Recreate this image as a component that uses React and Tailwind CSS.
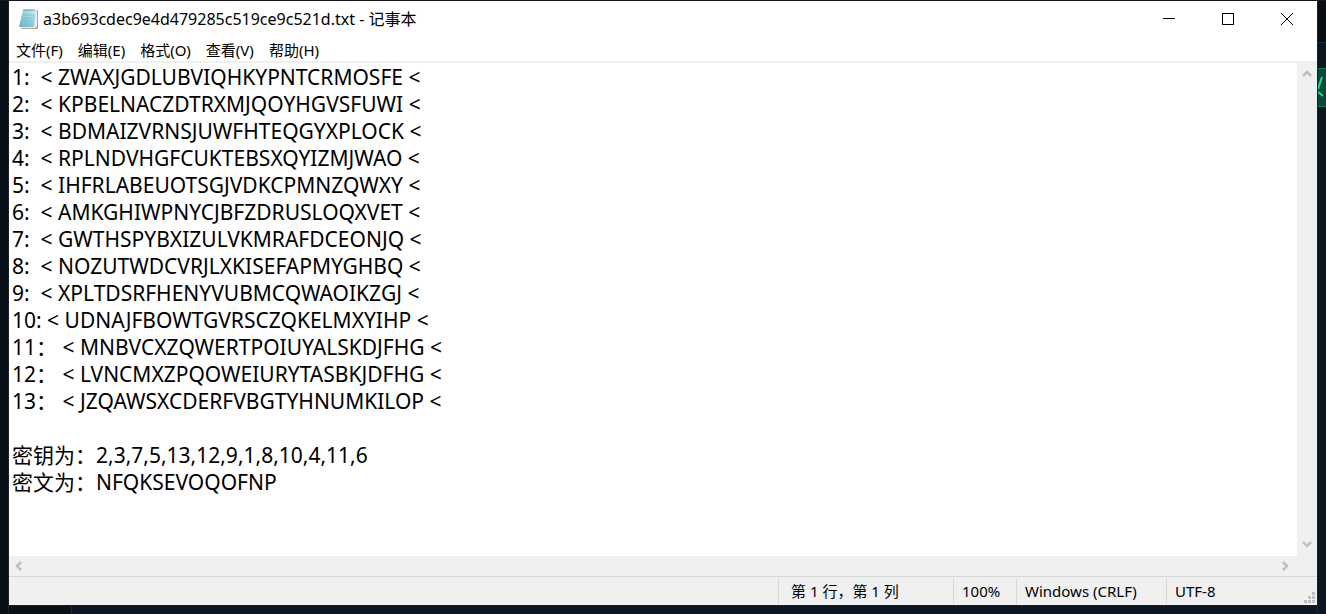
const LINES = [
  "1:  < ZWAXJGDLUBVIQHKYPNTCRMOSFE <",
  "2:  < KPBELNACZDTRXMJQOYHGVSFUWI <",
  "3:  < BDMAIZVRNSJUWFHTEQGYXPLOCK <",
  "4:  < RPLNDVHGFCUKTEBSXQYIZMJWAO <",
  "5:  < IHFRLABEUOTSGJVDKCPMNZQWXY <",
  "6:  < AMKGHIWPNYCJBFZDRUSLOQXVET <",
  "7:  < GWTHSPYBXIZULVKMRAFDCEONJQ <",
  "8:  < NOZUTWDCVRJLXKISEFAPMYGHBQ <",
  "9:  < XPLTDSRFHENYVUBMCQWAOIKZGJ <",
  "10: < UDNAJFBOWTGVRSCZQKELMXYIHP <",
  "11： < MNBVCXZQWERTPOIUYALSKDJFHG <",
  "12： < LVNCMXZPQOWEIURYTASBKJDFHG <",
  "13： < JZQAWSXCDERFVBGTYHNUMKILOP <",
  "",
  "密钥为：2,3,7,5,13,12,9,1,8,10,4,11,6",
  "密文为：NFQKSEVOQOFNP",
];

const MENUS = ["文件(F)", "编辑(E)", "格式(O)", "查看(V)", "帮助(H)"];

function NotepadIcon() {
  return (
    <svg width="20" height="22" viewBox="0 0 20 22" aria-hidden="true">
      <defs>
        <linearGradient id="page" x1="1" y1="0" x2="0" y2="1">
          <stop offset="0" stopColor="#cdeff3" />
          <stop offset="0.5" stopColor="#8fcfdd" />
          <stop offset="1" stopColor="#5fb0c6" />
        </linearGradient>
      </defs>
      <path d="M5 2h14v19H3L1 19z" fill="#b9a582" />
      <path d="M5 2h13v16l-2 2H2z" fill="#e8eeee" />
      <path d="M4 2h13L15 19H0z" fill="url(#page)" />
      <path d="M4 7h11M3 10h12M3 13h11M2 16h12" stroke="#7cc2d2" strokeWidth="1" />
      <path d="M5 1v2M7 1v2M9 1v2M11 1v2M13 1v2M15 1v2" stroke="#7c8588" strokeWidth="1" />
    </svg>
  );
}

function WindowButton({ label, children }) {
  return (
    <button type="button" aria-label={label} className="flex h-9 w-[59px] items-center justify-center">
      <svg width="12" height="12" viewBox="0 0 12 12" fill="none" stroke="#000" shapeRendering="crispEdges">
        {children}
      </svg>
    </button>
  );
}

function ScrollButton({ label, d }) {
  return (
    <button type="button" aria-label={label} className="flex size-5 items-center justify-center">
      <svg width="10" height="10" viewBox="0 0 10 10" fill="none" stroke="#bfbfbf" strokeWidth="2.5">
        <path d={d} />
      </svg>
    </button>
  );
}

function SizeGrip() {
  return (
    <svg className="absolute right-0.5 bottom-0.5" width="11" height="11" viewBox="0 0 11 11" fill="#bfbfbf" aria-hidden="true">
      <path d="M8 0h3v3h-3zM4 4h3v3h-3zM8 4h3v3h-3zM0 8h3v3h-3zM4 8h3v3h-3zM8 8h3v3h-3z" />
    </svg>
  );
}

export default function App() {
  return (
    <div className="flex h-screen bg-[#1a1620] pt-px font-['Noto_Sans','Noto_Sans_CJK_SC',sans-serif] text-black">
      <div className="w-[9px] shrink-0 border-r border-[#1c1f22] bg-[#091018]" />

      <div className="flex min-w-0 flex-1 flex-col">
        <div className="flex min-h-0 flex-1 flex-col bg-white">
          <header className="flex h-9 shrink-0 items-center pl-2.5">
            <NotepadIcon />
            <h1 className="ml-1 flex-1 truncate text-[16px]">a3b693cdec9e4d479285c519ce9c521d.txt - 记事本</h1>
            <div className="flex pr-px">
              <WindowButton label="最小化">
                <path d="M0 5.5h12" />
              </WindowButton>
              <WindowButton label="最大化">
                <path d="M0.5 0.5h11v11h-11z" />
              </WindowButton>
              <WindowButton label="关闭">
                <path d="M0 0l12 12M12 0L0 12" shapeRendering="auto" />
              </WindowButton>
            </div>
          </header>

          <nav className="flex h-6 shrink-0 items-center gap-[15px] pt-0.5 pl-[7px] text-[15px]">
            {MENUS.map((menu) => (
              <button key={menu} type="button">
                {menu}
              </button>
            ))}
          </nav>

          <main className="flex min-h-0 flex-1 border-t-2 border-[#f0f0f0]">
            <textarea
              aria-label="文本编辑器"
              wrap="off"
              spellCheck={false}
              defaultValue={LINES.join("\n")}
              className="min-w-0 flex-1 resize-none overflow-hidden pt-px pl-[3px] text-[21px] leading-[27px] outline-none"
            />
            <div className="flex w-5 shrink-0 flex-col justify-between bg-[#f0f0f0] pb-0.5">
              <ScrollButton label="向上滚动" d="M1 8l4-4 4 4" />
              <ScrollButton label="向下滚动" d="M1 3l4 4 4-4" />
            </div>
          </main>

          <div className="flex h-5 shrink-0 justify-between bg-[#f0f0f0] pr-[22px]">
            <ScrollButton label="向左滚动" d="M7 1L3 5l4 4" />
            <ScrollButton label="向右滚动" d="M3 1l4 4-4 4" />
          </div>

          <footer className="relative flex h-[29px] shrink-0 justify-end border-t border-[#d7d7d7] bg-[#f0f0f0] py-px text-[15px] leading-[27px]">
            <span className="w-[175px] border-l border-[#d7d7d7] pl-3">第 1 行，第 1 列</span>
            <span className="w-[63px] border-l border-[#d7d7d7] pl-2">100%</span>
            <span className="w-[150px] border-l border-[#d7d7d7] pl-2">Windows (CRLF)</span>
            <span className="w-[151px] border-l border-[#d7d7d7] pl-2">UTF-8</span>
            <SizeGrip />
          </footer>
        </div>

        <div className="flex h-[9px] shrink-0 border-t border-[#1c1f22] bg-[#0a1018]">
          <div className="w-[63px] border-r border-[#14273f]" />
          <div className="flex-1 bg-[#0b1622]" />
        </div>
      </div>

      <div className="flex w-[9px] shrink-0 flex-col border-l border-[#1c1f22] bg-[#0b1622]">
        <div className="h-[42px] border-b border-[#0f2a4c] bg-[#090e14]" />
        <div className="h-[25px]" />
        <svg className="w-full" height="39" viewBox="0 0 8 39" fill="none" aria-hidden="true">
          <path d="M0 0h8v39H0z" fill="#064a37" />
          <path d="M0 0.5h8M0 38.5h8" stroke="#0a7a50" />
          <path d="M4 9L0 21M0 24l5 4" stroke="#12dc9c" strokeWidth="2" />
        </svg>
      </div>
    </div>
  );
}
